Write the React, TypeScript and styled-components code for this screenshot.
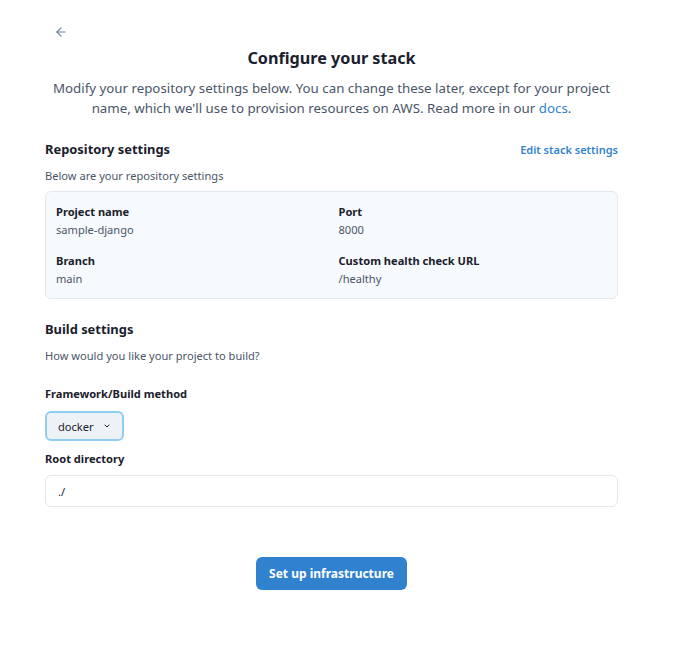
import styled, { createGlobalStyle } from 'styled-components';

const GlobalStyle = createGlobalStyle`
  body {
    margin: 0;
    background: #ffffff;
    font-family: "Noto Sans", "Open Sans", sans-serif;
    color: #1a202c;
  }
`;

const Page = styled.div`
  width: 573px;
  padding: 22px 0 40px 45px;
  display: flex;
  flex-direction: column;
`;

const BackButton = styled.button`
  align-self: flex-start;
  display: flex;
  align-items: center;
  justify-content: center;
  width: 24px;
  height: 20px;
  margin-left: 4px;
  padding: 0;
  border: none;
  background: none;
  color: #718096;
  cursor: pointer;
`;

const Title = styled.h1`
  margin: 4px 0 0;
  font-size: 16.2px;
  font-weight: 700;
  line-height: 24px;
  text-align: center;
  color: #1a202c;
`;

const Lead = styled.p`
  margin: 8px -12px 0;
  font-size: 13.3px;
  line-height: 20px;
  text-align: center;
  white-space: nowrap;
  color: #4a5568;
`;

const Link = styled.a`
  color: #3182ce;
  text-decoration: none;
`;

const SectionHead = styled.div<{ $top: number }>`
  display: flex;
  justify-content: space-between;
  align-items: center;
  margin-top: ${(p) => p.$top}px;
`;

const SectionTitle = styled.h2`
  margin: 0;
  font-size: 12.9px;
  font-weight: 700;
  line-height: 20px;
`;

const EditLink = styled.a`
  font-size: 11px;
  font-weight: 600;
  color: #3182ce;
  text-decoration: none;
`;

const Hint = styled.p`
  margin: 8px 0 0;
  font-size: 11.1px;
  line-height: 18px;
  color: #4a5568;
`;

const InfoBox = styled.div`
  margin-top: 6px;
  padding: 11px 10px 10px;
  background: #f7fafc;
  border: 1px solid #e2e8f0;
  border-radius: 6px;
  display: grid;
  grid-template-columns: 1fr 1fr;
  row-gap: 13px;
  column-gap: 14px;
`;

const Field = styled.div`
  display: flex;
  flex-direction: column;
`;

const FieldLabel = styled.span`
  font-size: 11.1px;
  font-weight: 700;
  line-height: 18px;
  color: #1a202c;
`;

const FieldValue = styled.span`
  font-size: 11.1px;
  line-height: 18px;
  color: #4a5568;
`;

const FormLabel = styled.label<{ $top: number }>`
  display: block;
  margin-top: ${(p) => p.$top}px;
  font-size: 11.1px;
  font-weight: 700;
  line-height: 18px;
  color: #1a202c;
`;

const SelectButton = styled.button`
  align-self: flex-start;
  display: flex;
  align-items: center;
  gap: 9px;
  margin-top: 8px;
  height: 30px;
  box-sizing: border-box;
  padding: 0 11px;
  background: #edf2f7;
  border: 2px solid #90cdf4;
  border-radius: 6px;
  font-family: inherit;
  font-size: 11.1px;
  color: #1a202c;
`;

const TextInput = styled.input`
  margin-top: 7px;
  height: 32px;
  box-sizing: border-box;
  padding: 0 12px;
  border: 1px solid #e2e8f0;
  border-radius: 6px;
  font-family: inherit;
  font-size: 11.1px;
  color: #1a202c;
  outline: none;
`;

const Actions = styled.div`
  display: flex;
  justify-content: center;
  margin-top: 50px;
`;

const PrimaryButton = styled.button`
  height: 33px;
  padding: 0 13px;
  background: #3182ce;
  color: #ffffff;
  border: none;
  border-radius: 6px;
  font-family: inherit;
  font-size: 12px;
  font-weight: 700;
  cursor: pointer;
`;

const fields = [
  { label: 'Project name', value: 'sample-django' },
  { label: 'Port', value: '8000' },
  { label: 'Branch', value: 'main' },
  { label: 'Custom health check URL', value: '/healthy' },
];

const App = () => {
  return (
    <>
      <GlobalStyle />
      <Page>
        <BackButton aria-label="Back">
          <svg width="14" height="14" viewBox="0 0 24 24" fill="none" stroke="currentColor" strokeWidth="2" strokeLinecap="round" strokeLinejoin="round">
            <path d="M19 12H5" />
            <path d="M12 19l-7-7 7-7" />
          </svg>
        </BackButton>
        <Title>Configure your stack</Title>
        <Lead>
          Modify your repository settings below. You can change these later, except for your project
          <br />
          name, which we'll use to provision resources on AWS. Read more in our <Link href="#">docs</Link>.
        </Lead>

        <SectionHead $top={21}>
          <SectionTitle>Repository settings</SectionTitle>
          <EditLink href="#">Edit stack settings</EditLink>
        </SectionHead>
        <Hint>Below are your repository settings</Hint>
        <InfoBox>
          {fields.map((f) => (
            <Field key={f.label}>
              <FieldLabel>{f.label}</FieldLabel>
              <FieldValue>{f.value}</FieldValue>
            </Field>
          ))}
        </InfoBox>

        <SectionHead $top={20}>
          <SectionTitle>Build settings</SectionTitle>
        </SectionHead>
        <Hint>How would you like your project to build?</Hint>

        <FormLabel $top={20}>Framework/Build method</FormLabel>
        <SelectButton>
          docker
          <svg width="8" height="8" viewBox="0 0 24 24" fill="none" stroke="currentColor" strokeWidth="3" strokeLinecap="round" strokeLinejoin="round">
            <path d="M6 9l6 6 6-6" />
          </svg>
        </SelectButton>
        <FormLabel $top={9}>Root directory</FormLabel>
        <TextInput defaultValue="./" />

        <Actions>
          <PrimaryButton>Set up infrastructure</PrimaryButton>
        </Actions>
      </Page>
    </>
  );
};

export default App;
